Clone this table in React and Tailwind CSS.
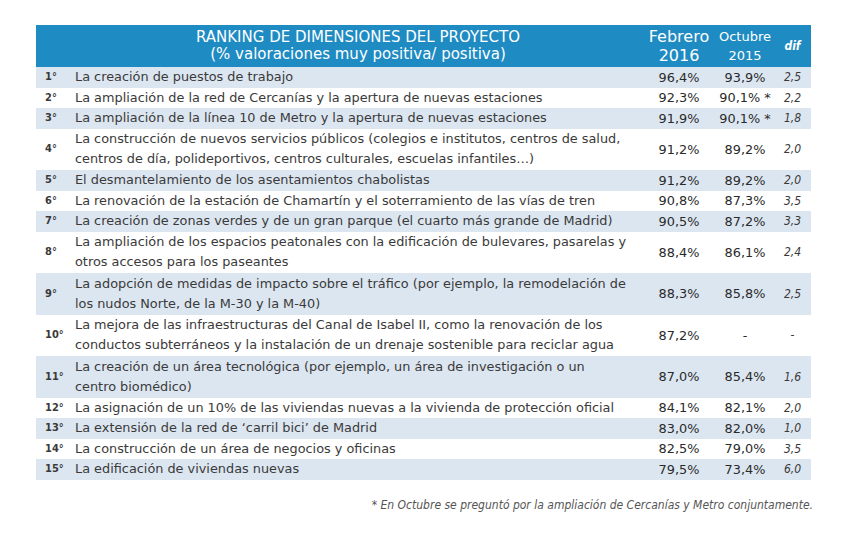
const rows = [
  { n: '1°', t: 'La creación de puestos de trabajo', f: '96,4%', o: '93,9%', d: '2,5' },
  { n: '2°', t: 'La ampliación de la red de Cercanías y la apertura de nuevas estaciones', f: '92,3%', o: '90,1% *', d: '2,2' },
  { n: '3°', t: 'La ampliación de la línea 10 de Metro y la apertura de nuevas estaciones', f: '91,9%', o: '90,1% *', d: '1,8' },
  { n: '4°', t: 'La construcción de nuevos servicios públicos (colegios e institutos, centros de salud,', t2: 'centros de día, polideportivos, centros culturales, escuelas infantiles…)', f: '91,2%', o: '89,2%', d: '2,0' },
  { n: '5°', t: 'El desmantelamiento de los asentamientos chabolistas', f: '91,2%', o: '89,2%', d: '2,0' },
  { n: '6°', t: 'La renovación de la estación de Chamartín y el soterramiento de las vías de tren', f: '90,8%', o: '87,3%', d: '3,5' },
  { n: '7°', t: 'La creación de zonas verdes y de un gran parque (el cuarto más grande de Madrid)', f: '90,5%', o: '87,2%', d: '3,3' },
  { n: '8°', t: 'La ampliación de los espacios peatonales con la edificación de bulevares, pasarelas y', t2: 'otros accesos para los paseantes', f: '88,4%', o: '86,1%', d: '2,4' },
  { n: '9°', t: 'La adopción de medidas de impacto sobre el tráfico (por ejemplo, la remodelación de', t2: 'los nudos Norte, de la M-30 y la M-40)', f: '88,3%', o: '85,8%', d: '2,5' },
  { n: '10°', t: 'La mejora de las infraestructuras del Canal de Isabel II, como la renovación de los', t2: 'conductos subterráneos y la instalación de un drenaje sostenible para reciclar agua', f: '87,2%', o: '-', d: '-' },
  { n: '11°', t: 'La creación de un área tecnológica (por ejemplo, un área de investigación o un', t2: 'centro biomédico)', f: '87,0%', o: '85,4%', d: '1,6' },
  { n: '12°', t: 'La asignación de un 10% de las viviendas nuevas a la vivienda de protección oficial', f: '84,1%', o: '82,1%', d: '2,0' },
  { n: '13°', t: 'La extensión de la red de ‘carril bici’ de Madrid', f: '83,0%', o: '82,0%', d: '1,0' },
  { n: '14°', t: 'La construcción de un área de negocios y oficinas', f: '82,5%', o: '79,0%', d: '3,5' },
  { n: '15°', t: 'La edificación de viviendas nuevas', f: '79,5%', o: '73,4%', d: '6,0' },
];

const font = { fontFamily: '"DejaVu Sans", sans-serif' };
const cond = { fontFamily: '"DejaVu Sans Condensed", "DejaVu Sans", sans-serif' };

export default function App() {
  return (
    <div className="w-[857px] h-[549px] bg-white pt-[25px] pl-[36px] text-[#3a3a3a]" style={font}>
      <div className="w-[775px]">
        <div className="grid grid-cols-[38px_568px_74px_58px_37px] h-[42px] bg-[#1e8bc3] text-white">
          <div></div>
          <div className="flex flex-col items-center justify-center text-[15px] leading-[17px] whitespace-nowrap">
            <span>RANKING DE DIMENSIONES DEL PROYECTO</span>
            <span>(% valoraciones muy positiva/ positiva)</span>
          </div>
          <div className="flex flex-col items-center justify-center text-[16px] leading-[19px]">
            <span>Febrero</span>
            <span>2016</span>
          </div>
          <div className="flex flex-col items-center justify-center text-[13px] leading-[19px]">
            <span>Octubre</span>
            <span>2015</span>
          </div>
          <div className="flex items-center justify-center text-[12px] italic font-bold" style={cond}>dif</div>
        </div>
        {rows.map((r, i) => (
          <div
            key={r.n}
            className={
              'grid grid-cols-[38px_568px_74px_58px_37px] items-center text-[12.85px] ' +
              (r.t2 ? 'h-[41.5px] ' : 'h-[20.5px] ') +
              (i % 2 === 0 ? 'bg-[#dce6f1]' : 'bg-white')
            }
          >
            <div className="pl-[9px] text-[11px] font-bold" style={cond}>{r.n}</div>
            <div className="leading-[20px] pl-[1px] whitespace-nowrap">
              <div>{r.t}</div>
              {r.t2 && <div>{r.t2}</div>}
            </div>
            <div className="text-center text-[#2a2a2a]">{r.f}</div>
            <div className="text-center text-[#2a2a2a]">{r.o}</div>
            <div className="text-center text-[12px] italic" style={cond}>{r.d}</div>
          </div>
        ))}
        <div className="w-[777px] mt-[16px] text-right text-[12px] italic text-[#555]" style={cond}>
          * En Octubre se preguntó por la ampliación de Cercanías y Metro conjuntamente.
        </div>
      </div>
    </div>
  );
}
